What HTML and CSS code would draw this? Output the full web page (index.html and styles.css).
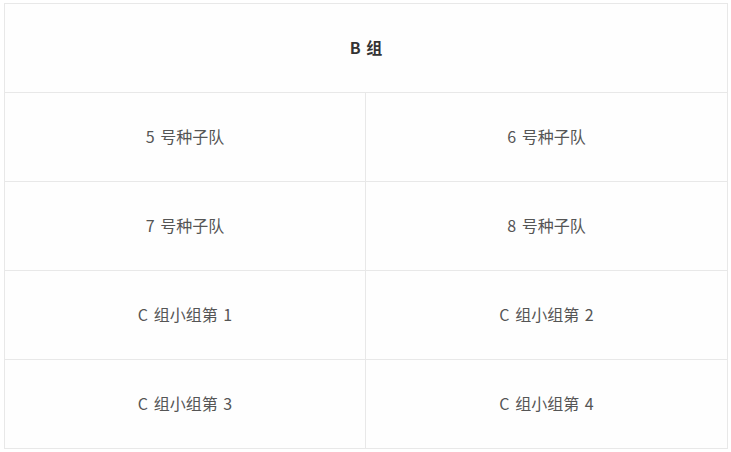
FILE: index.html
```html
<!DOCTYPE html>
<html lang="zh">
<head>
<meta charset="utf-8">
<link rel="stylesheet" href="styles.css">
</head>
<body>
<table class="bracket">
  <colgroup><col class="left"><col class="right"></colgroup>
  <thead>
    <tr><th colspan="2">B 组</th></tr>
  </thead>
  <tbody>
    <tr><td>5 号种子队</td><td>6 号种子队</td></tr>
    <tr><td>7 号种子队</td><td>8 号种子队</td></tr>
    <tr><td>C 组小组第 1</td><td>C 组小组第 2</td></tr>
    <tr><td>C 组小组第 3</td><td>C 组小组第 4</td></tr>
  </tbody>
</table>
</body>
</html>
```
FILE: styles.css
```css
html, body {
  margin: 0;
  background: #ffffff;
}
body {
  padding: 3px 0 0 4px;
  font-family: "Noto Sans CJK SC", "Noto Sans", sans-serif;
}
.bracket {
  border-collapse: collapse;
  width: 724px;
  table-layout: fixed;
  background: #fefefe;
}
.bracket .left { width: 361px; }
.bracket th,
.bracket td {
  border: 1px solid #e8e8e8;
  height: 89px;
  box-sizing: border-box;
  padding: 0 0 2px 0;
  text-align: center;
  vertical-align: middle;
  font-size: 16px;
  word-spacing: 2px;
}
.bracket th {
  font-weight: 700;
  color: #333333;
}
.bracket td {
  color: #555555;
  font-weight: 400;
}
```
